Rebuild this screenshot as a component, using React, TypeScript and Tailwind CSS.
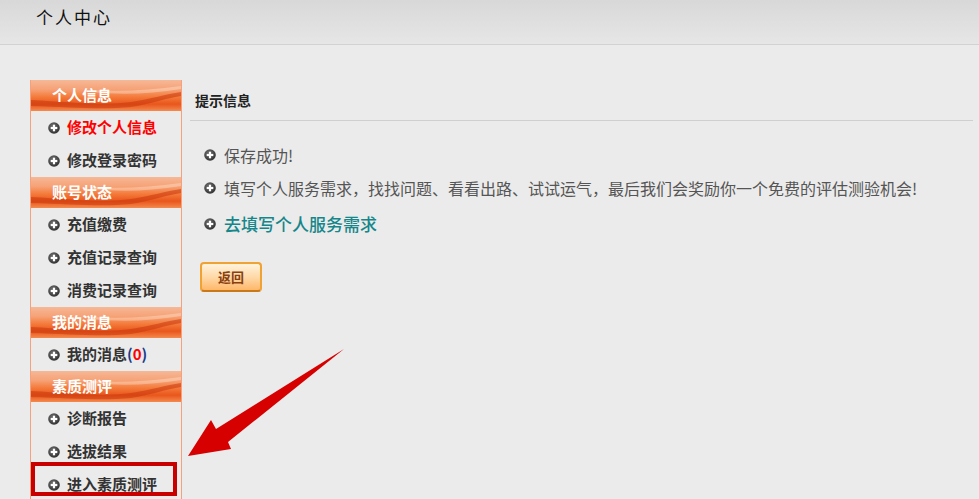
import React from "react";

const cn = '"Noto Sans CJK SC", "Liberation Sans", sans-serif';

function Bullet() {
  return (
    <svg width="12" height="12" viewBox="0 0 12 12" className="shrink-0">
      <defs>
        <radialGradient id="bg" cx="40%" cy="35%" r="70%">
          <stop offset="0%" stopColor="#6f6f6f" />
          <stop offset="100%" stopColor="#2e2e2e" />
        </radialGradient>
      </defs>
      <circle cx="6" cy="6" r="5.8" fill="url(#bg)" />
      <rect x="2.7" y="4.9" width="6.6" height="2.2" fill="#fff" />
      <rect x="4.9" y="2.7" width="2.2" height="6.6" fill="#fff" />
    </svg>
  );
}

function SectionHead({ title }: { title: string }) {
  return (
    <div className="relative h-[31px] overflow-hidden bg-[linear-gradient(to_bottom,#f6b896_0%,#f6a277_30%,#f47a3a_55%,#e9561c_78%,#f48a4e_100%)]">
      <svg
        className="absolute inset-0 h-full w-full"
        viewBox="0 0 150 31"
        preserveAspectRatio="none"
      >
        <path
          d="M0 20 C40 22 70 26 100 22 C120 19 135 14 150 12 L150 16 C135 18 120 24 100 27 C70 30 40 27 0 26 Z"
          fill="#c8360c"
          opacity="0.55"
        />
        <path
          d="M60 10 C90 12 120 10 150 6 L150 9 C120 14 90 15 60 12 Z"
          fill="#fff2e0"
          opacity="0.35"
        />
      </svg>
      <span className="relative flex h-full items-center pl-[21px] text-[15px] font-bold text-white">
        {title}
      </span>
    </div>
  );
}

interface Item {
  label: React.ReactNode;
  active?: boolean;
  boxed?: boolean;
}

function MenuItem({ label, active, boxed }: Item) {
  return (
    <div className="relative flex h-[33px] items-center gap-[7px] pl-[17px]">
      <Bullet />
      <span
        className={
          "text-[15px] font-bold " + (active ? "text-[#ff0000]" : "text-[#333]")
        }
      >
        {label}
      </span>
      {boxed && (
        <div className="absolute left-0 top-[-6px] h-[34px] w-[146px] border-4 border-[#c80000]" />
      )}
    </div>
  );
}

const menu: { title: string; items: Item[] }[] = [
  {
    title: "个人信息",
    items: [{ label: "修改个人信息", active: true }, { label: "修改登录密码" }],
  },
  {
    title: "账号状态",
    items: [
      { label: "充值缴费" },
      { label: "充值记录查询" },
      { label: "消费记录查询" },
    ],
  },
  {
    title: "我的消息",
    items: [
      {
        label: (
          <>
            我的消息<span className="text-[#1a3a8a]">(</span>
            <span className="text-[#ff0000]">0</span>
            <span className="text-[#1a3a8a]">)</span>
          </>
        ),
      },
    ],
  },
  {
    title: "素质测评",
    items: [
      { label: "诊断报告" },
      { label: "选拔结果" },
      { label: "进入素质测评", boxed: true },
    ],
  },
];

export default function App() {
  return (
    <div
      className="relative h-[499px] w-[979px] overflow-hidden bg-[#ebebeb]"
      style={{ fontFamily: cn }}
    >
      <div className="flex h-[45px] items-center border-b border-[#d2d2d2] bg-[linear-gradient(to_bottom,#d8d8d8,#e6e6e6)] pb-[10px] pl-[36px]">
        <span className="text-[17px] tracking-[2px] text-[#111]">个人中心</span>
      </div>

      <div className="flex gap-[8px] pl-[30px] pt-[35px]">
        <div className="w-[152px] shrink-0 border-x border-[#f7a07c]">
          {menu.map((sec) => (
            <div key={sec.title}>
              <SectionHead title={sec.title} />
              {sec.items.map((it, i) => (
                <MenuItem key={i} {...it} />
              ))}
            </div>
          ))}
        </div>

        <div className="w-[783px]">
          <div className="flex h-[41px] items-center border-b border-[#cfcfcf] pl-[5px] text-[14px] font-bold text-[#222]">
            提示信息
          </div>
          <div className="flex flex-col pl-[14px] pt-[19px] text-[16px]">
            <div className="flex h-[29px] items-center gap-[8px] text-[#555]">
              <Bullet />
              <span>保存成功!</span>
            </div>
            <div className="mt-[4px] flex h-[29px] items-center gap-[8px] text-[#555]">
              <Bullet />
              <span>
                填写个人服务需求，找找问题、看看出路、试试运气，最后我们会奖励你一个免费的评估测验机会!
              </span>
            </div>
            <div className="mt-[7px] flex h-[29px] items-center gap-[8px] text-[#15868a]">
              <Bullet />
              <span className="text-[17px] font-medium">去填写个人服务需求</span>
            </div>
          </div>
          <button className="ml-[10px] mt-[24px] flex h-[30px] w-[62px] items-center justify-center rounded-[4px] border-2 border-[#f0a232] border-b-[#c9781a] bg-[linear-gradient(to_bottom,#fff3dc,#ffd9a8_50%,#ffb86a)] text-[13px] font-bold text-[#8a3f10]">
            返回
          </button>
        </div>
      </div>

      <svg
        className="pointer-events-none absolute left-0 top-0"
        width="979"
        height="499"
      >
        <polygon
          points="188,456 211,420 216,429 344,349 228,442 231,449"
          fill="#d60000"
        />
      </svg>
    </div>
  );
}
